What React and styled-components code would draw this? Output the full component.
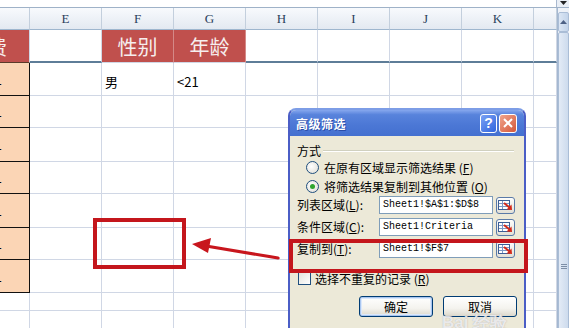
import React from "react";
import styled, { createGlobalStyle, css } from "styled-components";

const GlobalStyle = createGlobalStyle`
  * { box-sizing: border-box; }
  html, body { margin: 0; padding: 0; background: #fff; }
  body {
    width: 569px;
    height: 328px;
    overflow: hidden;
    font-family: "Noto Sans CJK SC", "Noto Sans", sans-serif;
  }
`;

const COLS = ["D", "E", "F", "G", "H", "I", "J", "K", "L"];
const ROW_H = [33, 33, 32, 34, 32, 34, 32, 33, 18, 18];

// cell content per row, keyed by column
const ROWS = [
  { D: { kind: "clip", text: "消费" }, F: { kind: "title", text: "性别" }, G: { kind: "title", text: "年龄" }, rule: true },
  { D: { kind: "peach", text: "1" }, F: { text: "男" }, G: { text: "<21" } },
  { D: { kind: "peach", text: "1" } },
  { D: { kind: "peach", text: "1" } },
  { D: { kind: "peach", text: "1" } },
  { D: { kind: "peach", text: "1" } },
  { D: { kind: "peach", text: "1" } },
  { D: { kind: "peach", text: "1" } },
  {},
  {},
];

const App = () => {
  return (
    <Page>
      <GlobalStyle />
      <TopBand>
        <DropButton>
          <svg width="7" height="4" viewBox="0 0 7 4">
            <path d="M0 0 L7 0 L3.5 4 Z" fill="#222" />
          </svg>
        </DropButton>
      </TopBand>
      <Main>
        <Sheet $rows={ROW_H}>
          {COLS.map((c) => (
            <ColHead key={c}>{c === "D" || c === "L" ? "" : c}</ColHead>
          ))}
          {ROWS.map((row, r) =>
            COLS.map((c) => {
              const cell = row[c] || {};
              const kind = cell.kind || (row.rule ? "rule" : "plain");
              return (
                <Cell key={c + r} $kind={kind}>
                  {cell.text}
                </Cell>
              );
            })
          )}
        </Sheet>
        <ScrollBar>
          <ScrollUp>
            <svg width="7" height="4" viewBox="0 0 7 4">
              <path d="M0 4 L3.5 0 L7 4 Z" fill="#4d6185" />
            </svg>
          </ScrollUp>
          <Thumb>
            <Grip />
          </Thumb>
        </ScrollBar>
      </Main>

      <Mark $left={93} $top={218} $width={93} $height={51} />
      <Arrow width="96" height="30" viewBox="0 0 96 30">
        <path d="M92 24 L20 12" stroke="#c8161d" strokeWidth="3.2" strokeLinecap="round" />
        <path d="M6 10 L25 4 L22 19 Z" fill="#c8161d" />
      </Arrow>

      <Dialog>
        <TitleBar>
          <Title>高级筛选</Title>
          <TitleButtons>
            <HelpButton>?</HelpButton>
            <CloseButton>
              <svg width="10" height="10" viewBox="0 0 10 10">
                <path d="M1 1 L9 9 M9 1 L1 9" stroke="#fff" strokeWidth="2" />
              </svg>
            </CloseButton>
          </TitleButtons>
        </TitleBar>
        <Body>
          <GroupHead>
            <span>方式</span>
            <GroupRule />
          </GroupHead>
          <RadioRow>
            <Radio />
            <span>
              在原有区域显示筛选结果 (<u>F</u>)
            </span>
          </RadioRow>
          <RadioRow>
            <Radio $checked />
            <span>
              将筛选结果复制到其他位置 (<u>O</u>)
            </span>
          </RadioRow>
          <RefList>
            <RefRow>
              <RefLabel>
                列表区域(<u>L</u>):
              </RefLabel>
              <RefInput>Sheet1!$A$1:$D$8</RefInput>
              <RefButton>
                <RefIcon />
              </RefButton>
            </RefRow>
            <RefRow>
              <RefLabel>
                条件区域(<u>C</u>):
              </RefLabel>
              <RefInput>Sheet1!Criteria</RefInput>
              <RefButton>
                <RefIcon />
              </RefButton>
            </RefRow>
            <RefRow>
              <RefLabel>
                复制到(<u>T</u>):
              </RefLabel>
              <RefInput>Sheet1!$F$7</RefInput>
              <RefButton>
                <RefIcon />
              </RefButton>
            </RefRow>
          </RefList>
          <CheckRow>
            <CheckBox />
            <span>
              选择不重复的记录 (<u>R</u>)
            </span>
          </CheckRow>
          <ButtonRow>
            <DlgButton $default>确定</DlgButton>
            <DlgButton>取消</DlgButton>
          </ButtonRow>
        </Body>
      </Dialog>

      <Mark $left={289} $top={239} $width={239} $height={34} />
      <Watermark>Bai 经验</Watermark>
    </Page>
  );
};

const RefIcon = () => (
  <svg width="15" height="11" viewBox="0 0 15 11">
    <rect x="0.5" y="0.5" width="11" height="9" fill="#fff" stroke="#3d5f95" />
    <path d="M1 3.5h10M1 6.5h10M4.5 1v8" stroke="#7d98c4" />
    <path d="M6 3 L11.5 7.5" stroke="#d42a1a" strokeWidth="2" />
    <path d="M14 10 L8.5 9.5 L13.5 4.5 Z" fill="#d42a1a" />
  </svg>
);

export default App;

const Page = styled.div`
  position: relative;
  width: 569px;
  height: 328px;
  overflow: hidden;
  display: flex;
  flex-direction: column;
  background: #fff;
`;

const TopBand = styled.div`
  height: 8px;
  flex: none;
  display: flex;
  justify-content: flex-end;
  border-bottom: 1px solid #9fb2c8;
  background: #fff;
`;

const DropButton = styled.div`
  width: 13px;
  height: 7px;
  display: flex;
  align-items: flex-start;
  justify-content: center;
  padding-top: 1px;
  border-left: 1px solid #a9b9cf;
  background: #e9eef5;
`;

const Main = styled.div`
  display: flex;
  flex: 1;
  min-height: 0;
`;

const Sheet = styled.div`
  display: grid;
  grid-template-columns: 30px repeat(7, 72px) 23px;
  grid-template-rows: 22px ${({ $rows }) => $rows.map((h) => h + "px").join(" ")};
  flex: none;
  width: 557px;
`;

const ColHead = styled.div`
  display: flex;
  align-items: center;
  justify-content: center;
  background: linear-gradient(#f8fafd, #e3e9f1);
  border-right: 1px solid #c3cfdd;
  border-bottom: 1px solid #9eb6ce;
  font-family: "Liberation Serif", "DejaVu Serif", serif;
  font-size: 13px;
  color: #2a3f5c;
`;

const Cell = styled.div`
  display: flex;
  align-items: center;
  padding: 4px 3px 0;
  overflow: hidden;
  white-space: nowrap;
  font-size: 13px;
  color: #000;
  border-right: 1px solid #d0d7e5;
  border-bottom: 1px solid #d0d7e5;

  ${({ $kind }) =>
    $kind === "rule" &&
    css`
      border-bottom: 2px solid #5e7d98;
    `}

  ${({ $kind }) =>
    $kind === "title" &&
    css`
      justify-content: center;
      padding: 0;
      background: #c0504d;
      color: #f6eeee;
      font-size: 20px;
      border-right-color: #d48987;
    `}

  ${({ $kind }) =>
    $kind === "clip" &&
    css`
      justify-content: flex-end;
      padding: 0 22px 0 0;
      background: #c0504d;
      color: #f6eeee;
      font-size: 20px;
      border-bottom: 1px solid #5a3a2a;
      border-right-color: #d0d7e5;
    `}

  ${({ $kind }) =>
    $kind === "peach" &&
    css`
      justify-content: flex-end;
      padding: 0 27px 0 0;
      background: #fbd5b5;
      border-right: 1px solid #111;
      border-bottom: 1px solid #111;
    `}
`;

const ScrollBar = styled.div`
  width: 12px;
  flex: none;
  display: flex;
  flex-direction: column;
  padding-top: 4px;
  background: #eef2f8;
  border-left: 1px solid #a5b8d0;
`;

const ScrollUp = styled.div`
  height: 20px;
  flex: none;
  display: flex;
  align-items: center;
  justify-content: center;
  background: linear-gradient(90deg, #dbe6f4, #c3d4ea);
  border: 1px solid #aabdd6;
  border-radius: 2px;
`;

const Thumb = styled.div`
  height: 470px;
  flex: none;
  display: flex;
  align-items: center;
  justify-content: center;
  background: linear-gradient(90deg, #e3ebf6, #cddbed);
  border: 1px solid #aabdd6;
  border-radius: 2px;
`;

const Grip = styled.div`
  width: 6px;
  height: 6px;
  background: repeating-linear-gradient(#7d8ea6 0 1px, transparent 1px 2px);
`;

const Mark = styled.div`
  position: absolute;
  left: ${({ $left }) => $left}px;
  top: ${({ $top }) => $top}px;
  width: ${({ $width }) => $width}px;
  height: ${({ $height }) => $height}px;
  border: 4px solid #c4161c;
  z-index: 5;
`;

const Arrow = styled.svg`
  position: absolute;
  left: 186px;
  top: 234px;
`;

const Dialog = styled.div`
  position: absolute;
  left: 288px;
  top: 108px;
  width: 238px;
  height: 240px;
  display: flex;
  flex-direction: column;
  background: #ece9d8;
  border: 2px solid #4b5ec6;
  border-top-color: #7d9de6;
  border-radius: 8px 8px 0 0;
  overflow: hidden;
  z-index: 2;
`;

const TitleBar = styled.div`
  height: 26px;
  flex: none;
  display: flex;
  align-items: center;
  justify-content: space-between;
  padding: 0 7px 0 6px;
  background: linear-gradient(#86a7ee 0%, #5883dc 18%, #4b77d5 60%, #4470d0 100%);
`;

const Title = styled.span`
  color: #fff;
  font-size: 12px;
  font-weight: bold;
  letter-spacing: 0.5px;
  text-shadow: 1px 1px 0 #2a4da8;
`;

const TitleButtons = styled.div`
  display: flex;
  gap: 2px;
`;

const HelpButton = styled.div`
  width: 17px;
  height: 19px;
  display: flex;
  align-items: center;
  justify-content: center;
  border: 1px solid #fff;
  border-radius: 3px;
  background: linear-gradient(135deg, #7ba2f4, #2f64de);
  color: #fff;
  font-family: "Liberation Sans", sans-serif;
  font-size: 14px;
  font-weight: bold;
`;

const CloseButton = styled(HelpButton)`
  width: 18px;
  background: linear-gradient(135deg, #f0a58c, #d5573a);
`;

const Body = styled.div`
  display: flex;
  flex-direction: column;
  padding: 8px 7px 0;
  font-size: 12px;
  color: #000;
  line-height: 1;
`;

const GroupHead = styled.div`
  height: 14px;
  display: flex;
  align-items: center;
  gap: 2px;
`;

const GroupRule = styled.div`
  flex: 1;
  height: 2px;
  margin-right: 3px;
  border-top: 1px solid #d0d0bf;
  border-bottom: 1px solid #fff;
`;

const RadioRow = styled.div`
  height: 19px;
  display: flex;
  align-items: center;
  gap: 5px;
  padding-left: 9px;
  &:first-of-type {
    margin-top: 2px;
  }
`;

const Radio = styled.span`
  position: relative;
  width: 13px;
  height: 13px;
  flex: none;
  border-radius: 50%;
  border: 1px solid #1f4f7e;
  background: radial-gradient(circle at 40% 40%, #fff, #dcdad2);

  ${({ $checked }) =>
    $checked &&
    css`
      &::after {
        content: "";
        position: absolute;
        left: 3px;
        top: 3px;
        width: 5px;
        height: 5px;
        border-radius: 50%;
        background: #2fa52f;
      }
    `}
`;

const RefList = styled.div`
  display: flex;
  flex-direction: column;
  gap: 4px;
`;

const RefRow = styled.div`
  height: 18px;
  display: flex;
  align-items: center;
`;

const RefLabel = styled.span`
  width: 82px;
  flex: none;
`;

const RefInput = styled.div`
  width: 114px;
  height: 18px;
  display: flex;
  align-items: center;
  padding-left: 3px;
  background: #fff;
  border: 1px solid #7f9db9;
  font-family: "Liberation Mono", "DejaVu Sans Mono", monospace;
  font-size: 10px;
  color: #000;
`;

const RefButton = styled.div`
  width: 19px;
  height: 17px;
  margin-left: 3px;
  display: flex;
  align-items: center;
  justify-content: center;
  border: 1px solid #5a7aa8;
  border-radius: 3px;
  background: linear-gradient(#fdfdfb, #e2e0d6);
`;

const CheckRow = styled.div`
  height: 13px;
  margin-top: 14px;
  display: flex;
  align-items: center;
  gap: 4px;
  padding-left: 1px;
`;

const CheckBox = styled.span`
  width: 13px;
  height: 13px;
  flex: none;
  border: 1px solid #1f4f7e;
  background: linear-gradient(135deg, #e4e3dc, #fff);
`;

const ButtonRow = styled.div`
  margin-top: 11px;
  display: flex;
  justify-content: flex-end;
  gap: 10px;
`;

const DlgButton = styled.div`
  width: 74px;
  height: 21px;
  display: flex;
  align-items: center;
  justify-content: center;
  border: 1px solid #003c74;
  border-radius: 3px;
  background: linear-gradient(#ffffff 0%, #f4f3ee 60%, #dcd8cc 100%);
  font-size: 12px;
  ${({ $default }) =>
    $default &&
    css`
      box-shadow: inset 0 0 0 1px #a9c6f0, inset 0 0 0 2px #dbe8fb;
    `}
`;

const Watermark = styled.div`
  position: absolute;
  left: 442px;
  top: 311px;
  font-family: "Liberation Sans", sans-serif;
  font-size: 17px;
  font-weight: bold;
  color: rgba(255, 255, 255, 0.75);
  text-shadow: 0 0 1px rgba(120, 120, 140, 0.6);
  z-index: 6;
  white-space: nowrap;
`;
